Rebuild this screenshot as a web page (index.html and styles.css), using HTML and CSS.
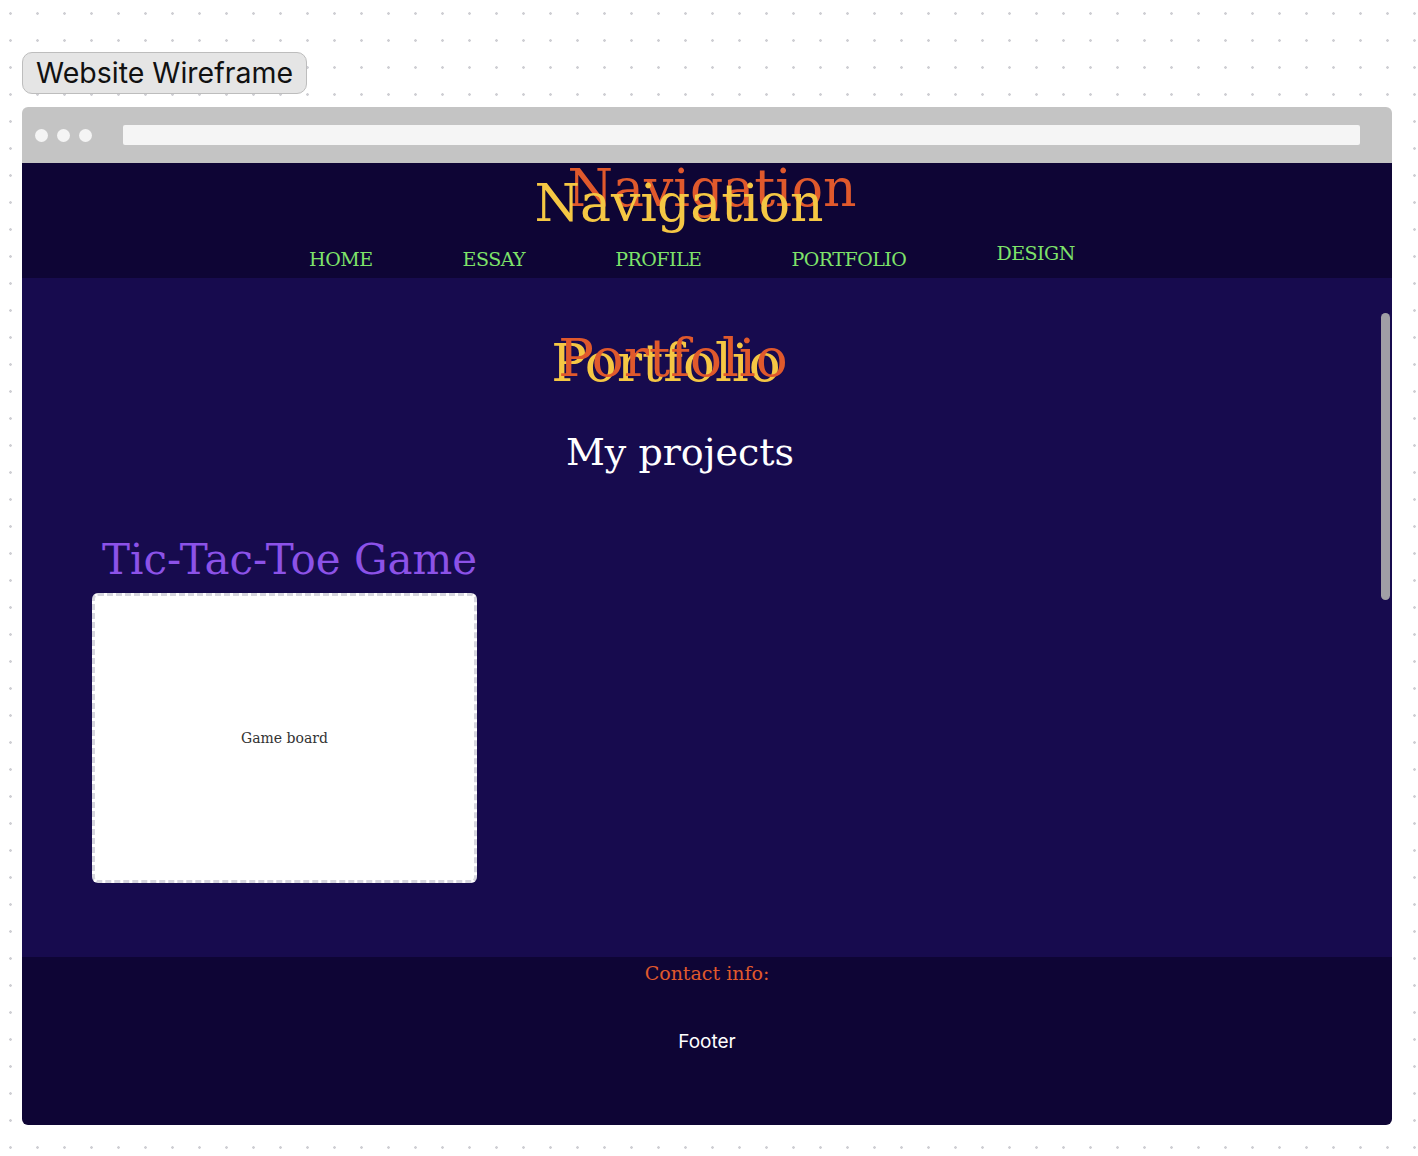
FILE: index.html
```html
<!DOCTYPE html>
<html lang="en">
<head>
<meta charset="utf-8">
<title>Website Wireframe</title>
<link rel="stylesheet" href="styles.css">
</head>
<body>
<div class="canvas">
  <div class="label">Website Wireframe</div>
  <div class="browser">
    <div class="toolbar">
      <div class="dots"><span></span><span></span><span></span></div>
      <div class="url"></div>
    </div>
    <div class="page">
      <header class="site-header">
        <h1 class="nav-title">Navigation</h1>
        <nav class="nav">
          <a class="nav-link">HOME</a>
          <a class="nav-link">ESSAY</a>
          <a class="nav-link">PROFILE</a>
          <a class="nav-link">PORTFOLIO</a>
          <a class="nav-link nav-link-up">DESIGN</a>
        </nav>
      </header>
      <main class="main">
        <h2 class="page-title">Portfolio</h2>
        <p class="subtitle">My projects</p>
        <section class="project">
          <h3 class="project-title">Tic-Tac-Toe Game</h3>
          <div class="board">Game board</div>
        </section>
        <div class="scrollbar"></div>
      </main>
      <footer class="footer">
        <p class="contact">Contact info:</p>
        <p class="footer-text">Footer</p>
      </footer>
    </div>
  </div>
</div>
</body>
</html>
```

FILE: styles.css
```css
html, body {
  margin: 0;
  padding: 0;
}

body {
  width: 1418px;
  height: 1156px;
  background-color: #ffffff;
  background-image: radial-gradient(circle, #cfcfd4 1px, transparent 1.6px);
  background-size: 27px 27px;
  background-position: -3px 0px;
  font-family: "DejaVu Serif", serif;
  overflow: hidden;
}

.canvas {
  padding: 52px 26px 0 22px;
  display: flex;
  flex-direction: column;
  align-items: flex-start;
}

.label {
  font-family: Inter, "Noto Sans", sans-serif;
  font-size: 28.5px;
  line-height: 40px;
  color: #111;
  background: #e5e5e5;
  border: 1px solid #bdbdbd;
  border-radius: 10px;
  padding: 0 13px;
  height: 40px;
  margin-bottom: 13px;
}

.browser {
  width: 1370px;
  display: flex;
  flex-direction: column;
}

.toolbar {
  height: 56px;
  background: #c4c4c4;
  border-radius: 6px 6px 0 0;
  display: flex;
  align-items: center;
  padding: 0 32px 0 13px;
  gap: 31px;
}

.dots {
  display: flex;
  gap: 9px;
}

.dots span {
  width: 13px;
  height: 13px;
  border-radius: 50%;
  background: #f4f4f4;
}

.url {
  flex: 1;
  height: 20px;
  background: #f5f5f5;
  border-radius: 2px;
}

.page {
  display: flex;
  flex-direction: column;
  border-radius: 0 0 6px 6px;
  overflow: hidden;
}

.site-header {
  height: 115px;
  background: #0e0535;
  display: flex;
  flex-direction: column;
  align-items: center;
}

.nav-title {
  margin: 10px 0 0 0;
  font-weight: normal;
  font-size: 52px;
  line-height: 60px;
  color: #f5c744;
  text-shadow: 33px -15px 0 #e0592c;
  transform: translateX(-28px);
}

.nav {
  display: flex;
  align-items: flex-end;
  gap: 90px;
  margin-top: 15px;
  transform: translateX(-15px);
}

.nav-link {
  font-size: 19px;
  color: #7ee36a;
  letter-spacing: -0.5px;
}

.nav-link-up {
  transform: translateY(-6px);
}

.main {
  position: relative;
  height: 679px;
  background: #170b4e;
  display: flex;
  flex-direction: column;
  align-items: center;
}

.page-title {
  margin: 50px 0 0 0;
  font-weight: normal;
  font-size: 53px;
  line-height: 60px;
  color: #e0592c;
  text-shadow: -7px 5px 0 #f5c744;
  transform: translateX(-34px);
}

.subtitle {
  margin: 39px 0 0 0;
  font-size: 38px;
  line-height: 50px;
  color: #ffffff;
  transform: translateX(-27px);
}

.project {
  align-self: flex-start;
  margin: 57px 0 0 70px;
  display: flex;
  flex-direction: column;
}

.project-title {
  margin: 0 0 7px 10px;
  font-weight: normal;
  font-size: 42px;
  line-height: 52px;
  color: #8c52e8;
}

.board {
  width: 385px;
  height: 290px;
  box-sizing: border-box;
  background: #ffffff;
  border: 3px dashed #d6d6de;
  border-radius: 6px;
  display: flex;
  align-items: center;
  justify-content: center;
  font-size: 14px;
  color: #333333;
}

.scrollbar {
  position: absolute;
  right: 2px;
  top: 35px;
  width: 9px;
  height: 287px;
  border-radius: 5px;
  background: #a09fa6;
}

.footer {
  height: 168px;
  background: #0e0535;
  display: flex;
  flex-direction: column;
  align-items: center;
}

.contact {
  margin: 2px 0 0 0;
  font-size: 19px;
  line-height: 28px;
  color: #e0592c;
}

.footer-text {
  margin: 43px 0 0 0;
  font-family: Inter, "Noto Sans", sans-serif;
  font-size: 19px;
  line-height: 24px;
  color: #ffffff;
}
```
